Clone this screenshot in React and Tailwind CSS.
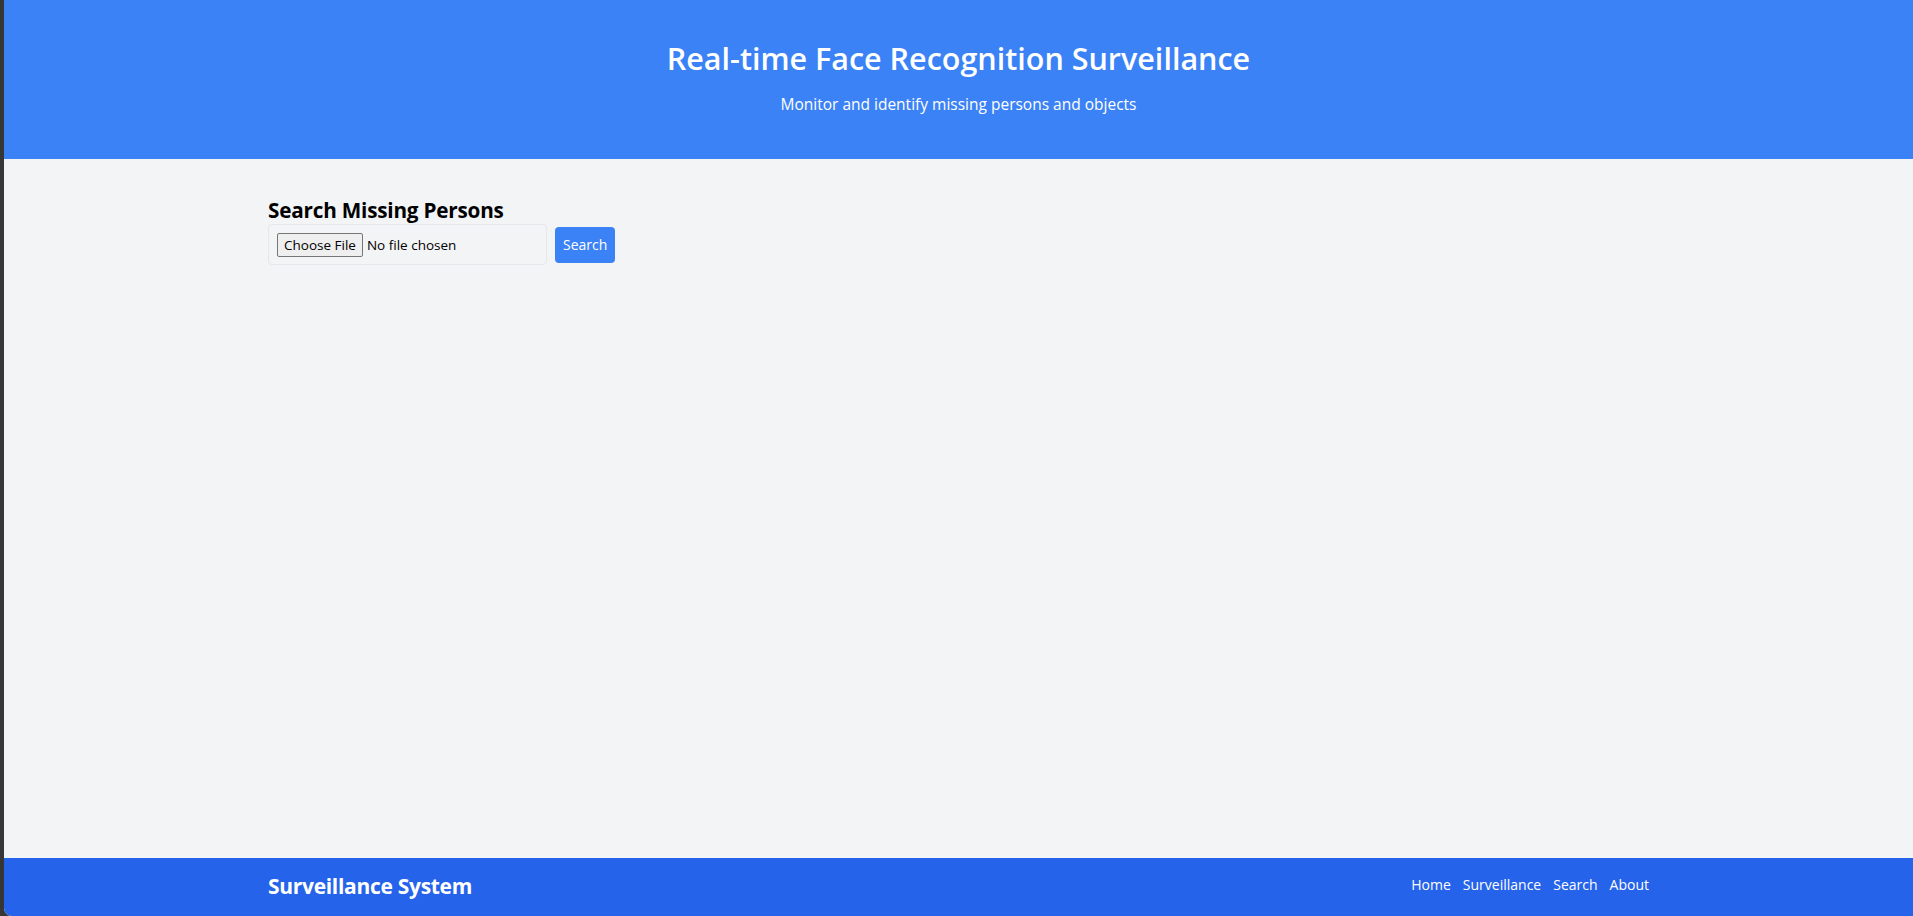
export default function App() {
  return (
    <div className="min-h-screen bg-[#363636] pl-1" style={{ fontFamily: '"Open Sans", "Noto Sans", sans-serif' }}>
      <div className="min-h-screen flex flex-col bg-[#f3f4f6] rounded-bl-lg overflow-hidden">
        <header className="bg-[#3b82f6] text-white text-center pt-10 pb-[43px]">
          <h1 className="text-[30.5px] leading-9 font-semibold">Real-time Face Recognition Surveillance</h1>
          <p className="mt-4 text-[15.5px] leading-6">Monitor and identify missing persons and objects</p>
        </header>

        <main className="flex-1">
          <div className="w-[1381px] mx-auto pt-[37px]">
            <h2 className="text-[20.7px] leading-7 font-bold text-black tracking-[-0.2px]">Search Missing Persons</h2>
            <div className="flex items-center gap-2">
              <input
                type="file"
                className="w-[279px] h-[41px] p-2 border border-[#e5e7eb] rounded text-[13.5px] text-black file:mr-1 file:px-1.5 file:h-6 file:border file:border-[#767676] file:bg-[#efefef] file:rounded-[2px] file:text-[13.5px]"
              />
              <button className="bg-[#3b82f6] text-white text-[14px] leading-5 px-2 py-2 rounded">Search</button>
            </div>
          </div>
        </main>

        <footer className="bg-[#2563eb] text-white h-[58px] flex items-center">
          <div className="w-[1381px] mx-auto flex items-center justify-between">
            <span className="text-[21px] font-bold tracking-[-0.3px]">Surveillance System</span>
            <nav className="flex gap-3 text-[14px] -mt-1.5">
              <a href="#">Home</a>
              <a href="#">Surveillance</a>
              <a href="#">Search</a>
              <a href="#">About</a>
            </nav>
          </div>
        </footer>
      </div>
    </div>
  );
}
